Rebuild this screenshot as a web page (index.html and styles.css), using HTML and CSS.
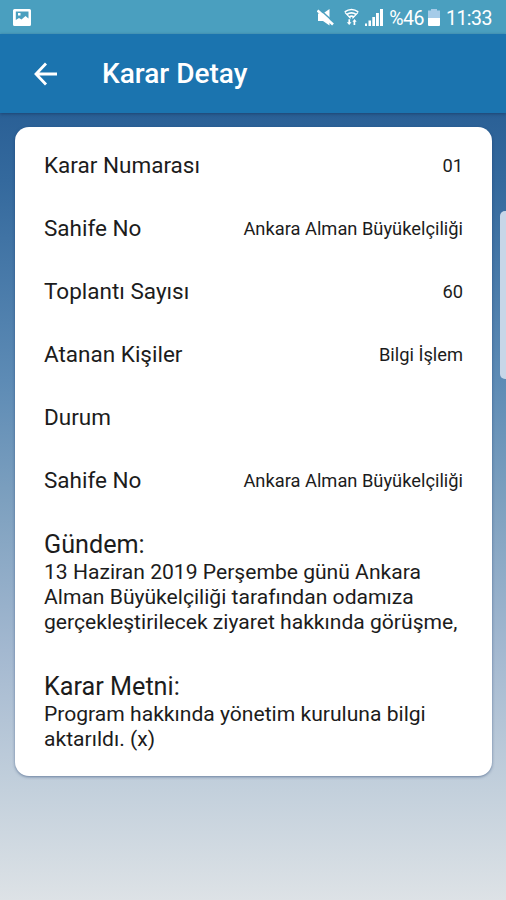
FILE: index.html
```html
<!DOCTYPE html>
<html lang="tr">
  <head>
    <meta charset="UTF-8" />
    <meta name="viewport" content="width=device-width, initial-scale=1.0" />
    <title>Karar Detay</title>
    <link rel="stylesheet" href="styles.css">
  </head>
  <body>
    <div class="status-bar">
      <svg class="icon-image" width="18" height="17" viewBox="0 0 18 17">
        <path fill="#fff" fill-rule="evenodd" d="M1.500 0h15a1.500 1.500 0 0 1 1.500 1.500v14a1.500 1.500 0 0 1-1.500 1.500h-15a1.500 1.500 0 0 1-1.500-1.500v-14a1.500 1.500 0 0 1 1.500-1.500zM2.800 2.500v8.500l3.200-2 2.500 1.500 4-3.500 3 2.500v-7zM5 4h2.500v2.500H5z" />
      </svg>
      <div class="status-right">
        <svg class="icon-mute" width="17" height="17" viewBox="0 0 17 17">
          <path fill="#fff" d="M1 4.500h5L12.500 0v16.500L6 12H1z" />
          <path stroke="#4a9fbf" stroke-width="1.500" d="M2.500 0l15 14" />
          <path stroke="#fff" stroke-width="2.600" d="M.5 1.500l15.500 14" />
        </svg>
        <svg class="icon-wifi" width="15" height="18" viewBox="0 0 16 18">
          <g fill="none" stroke="#fff" stroke-width="1.800">
            <path d="M.8 3.500Q8-1.500 15.200 3.500" />
            <path d="M3 6.300q5-3.500 10 0" />
            <path d="M5.300 9q2.700-1.800 5.400 0" />
            <path d="M1 4l6 6.500M15 4L9 10.500" stroke-width="1.300" />
          </g>
          <path fill="#fff" d="M3 14.500h1.700V11.500h1.800v3h1.500L5.500 17.500zM9 14l2.200-3 2.300 3H12v3.500h-1.800V14z" />
        </svg>
        <svg class="icon-signal" width="18" height="17" viewBox="0 0 18 17">
          <path fill="#fff" d="M0 14.500h2V17H0zM3.500 11.500H6V17H3.500zM7.300 8H10v9H7.300zM11 4h2.900v13H11zM15 0h3v17h-3z" />
        </svg>
        <span class="battery-text">%46</span>
        <svg class="icon-battery" width="12" height="17" viewBox="0 0 12 17">
          <path fill="#a6cbe8" d="M3 0h6v1.500h3V9H0V1.500h3z" />
          <path fill="#fff" d="M0 9h12v7a1 1 0 0 1-1 1H1a1 1 0 0 1-1-1z" />
        </svg>
        <span class="clock">11:33</span>
      </div>
    </div>

    <header>
      <button class="back-btn" aria-label="Geri">
        <svg width="24" height="24" viewBox="0 0 24 24">
          <path fill="none" stroke="#fff" stroke-width="2.800" d="M24 12H3.500M13 1.500L3 12l10 10.500" />
        </svg>
      </button>
      <h1>Karar Detay</h1>
    </header>

    <main>
      <section class="card">
        <div class="row">
          <span class="label">Karar Numarası</span>
          <span class="value">01</span>
        </div>
        <div class="row">
          <span class="label">Sahife No</span>
          <span class="value">Ankara Alman Büyükelçiliği</span>
        </div>
        <div class="row">
          <span class="label">Toplantı Sayısı</span>
          <span class="value">60</span>
        </div>
        <div class="row">
          <span class="label">Atanan Kişiler</span>
          <span class="value">Bilgi İşlem</span>
        </div>
        <div class="row">
          <span class="label">Durum</span>
        </div>
        <div class="row">
          <span class="label">Sahife No</span>
          <span class="value">Ankara Alman Büyükelçiliği</span>
        </div>

        <div class="text-block">
          <h2>Gündem:</h2>
          <p>13 Haziran 2019 Perşembe günü Ankara<br />Alman Büyükelçiliği tarafından odamıza<br />gerçekleştirilecek ziyaret hakkında görüşme,</p>
        </div>
        <div class="text-block">
          <h2>Karar Metni:</h2>
          <p>Program hakkında yönetim kuruluna bilgi<br />aktarıldı. (x)</p>
        </div>
      </section>
    </main>

    <div class="edge-handle"></div>
  </body>
</html>
```

FILE: styles.css
```css
:root {
  --status-color: #4a9fbf;
  --theme-color: #1b74af;
}

* {
  margin: 0;
  padding: 0;
  box-sizing: border-box;
  font-family: Roboto, sans-serif;
}

body {
  height: 100vh;
  overflow: hidden;
  display: flex;
  flex-direction: column;
  background: linear-gradient(#2a6096 113px, #34699d 180px, #5d8bb5 380px, #7da0bf 500px, #a3b8d0 650px, #c3d0dc 790px, #dde2e6 900px);
}

.status-bar {
  height: 34px;
  padding: 0 14px 0 13px;
  display: flex;
  align-items: center;
  justify-content: space-between;
  background: var(--status-color);
  color: white;
}

.status-right {
  display: flex;
  align-items: center;
  font-size: 19.5px;
}

.icon-wifi {
  margin-left: 10px;
}

.icon-signal {
  margin-left: 6px;
}

.battery-text {
  margin: 2px 4px 0 6px;
  letter-spacing: -0.5px;
}

.clock {
  margin: 2px 0 0 6px;
  letter-spacing: -0.5px;
}

header {
  height: 79px;
  padding-left: 33px;
  display: flex;
  align-items: center;
  background: var(--theme-color);
  color: white;
  box-shadow: 0 1px 3px rgba(20, 50, 90, 0.6);
}

.back-btn {
  display: flex;
  margin-right: 45px;
  border: none;
  background: none;
}

header h1 {
  font-size: 28px;
  font-weight: 500;
}

.card {
  height: 649px;
  margin: 14px 14px 0 15px;
  padding: 7px 29px 0;
  border-radius: 14px;
  background: white;
  box-shadow: 0 1px 3px rgba(20, 50, 100, 0.5);
  color: #1c1c1c;
}

.row {
  height: 63px;
  display: flex;
  align-items: center;
  justify-content: space-between;
}

.label {
  padding-bottom: 2px;
  font-size: 22.5px;
}

.value {
  padding-bottom: 1px;
  font-size: 18.3px;
}

.text-block {
  padding-top: 19px;
  margin-bottom: 20px;
}

.text-block h2 {
  font-size: 25.2px;
  font-weight: 400;
  line-height: 28px;
}

.text-block p {
  font-size: 21.1px;
  line-height: 25px;
  white-space: nowrap;
}

/* kenar paneli tutamacı */
.edge-handle {
  position: fixed;
  top: 211px;
  right: 0;
  width: 6px;
  height: 168px;
  border-radius: 5px 0 0 5px;
  background: #c7d6e8;
}
```
